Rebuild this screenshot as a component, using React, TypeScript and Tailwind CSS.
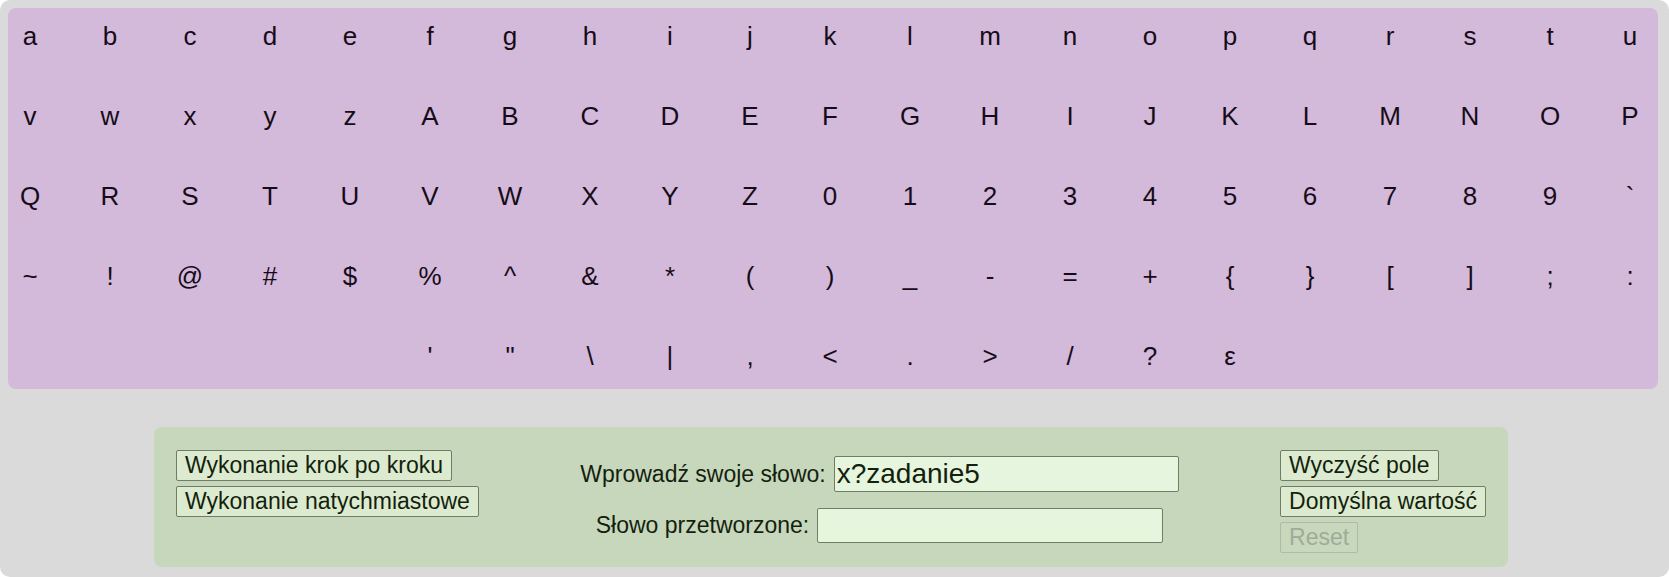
import React from "react";

const rows: string[][] = [
	"abcdefghijklmnopqrstu".split(""),
	"vwxyzABCDEFGHIJKLMNOP".split(""),
	"QRSTUVWXYZ0123456789`".split(""),
	["~", "!", "@", "#", "$", "%", "^", "&", "*", "(", ")", "_", "-", "=", "+", "{", "}", "[", "]", ";", ":"],
	["", "", "", "", "", "'", '"', "\\", "|", ",", "<", ".", ">", "/", "?", "ε"],
];

function Btn({ label, disabled }: { label: string; disabled?: boolean }) {
	return (
		<button
			type="button"
			disabled={disabled}
			className={
				disabled
					? "h-[31px] px-2 border border-[#aebba6] rounded-[2px] bg-[#c8d8bd] text-[#9eac97] text-[23px] leading-none whitespace-nowrap"
					: "h-[31px] px-2 border border-[#6e7d63] rounded-[2px] bg-[#dcebd0] text-[#141f0e] text-[23px] leading-none whitespace-nowrap"
			}
		>
			{label}
		</button>
	);
}

export default function App() {
	const [word, setWord] = React.useState("x?zadanie5");
	const [out, setOut] = React.useState("");
	return (
		<div
			className="w-full h-[577px] bg-[#dadada] rounded-[10px] overflow-hidden"
			style={{ fontFamily: '"Liberation Sans", Arial, sans-serif' }}
		>
			<div className="pt-2 pl-2">
				<div className="w-[1650px] h-[381px] bg-[#d3b9da] rounded-[8px] pt-[6px]">
					<div className="grid grid-cols-[repeat(21,44px)] auto-rows-[44px] gap-x-[36px] gap-y-[36px]">
						{rows.map((r, i) =>
							r.map((ch, j) => (
								<div
									key={i + "-" + j}
									className="flex items-center justify-center text-[26px] text-[#160c18] cursor-pointer select-none"
								>
									{ch}
								</div>
							))
						)}
					</div>
				</div>
			</div>
			<div className="mt-[38px] ml-[154px] w-[1354px] h-[140px] bg-[#c7d7bc] rounded-[8px] px-[22px] pt-[23px] flex justify-between items-start text-[#141f0e]">
				<div className="flex flex-col items-start gap-[5px]">
					<Btn label="Wykonanie krok po kroku" />
					<Btn label="Wykonanie natychmiastowe" />
				</div>
				<div className="flex flex-col items-center gap-[16px] mt-[6px]">
					<div className="flex items-center gap-2">
						<span className="text-[23px]">Wprowadź swoje słowo:</span>
						<input
							value={word}
							onInput={(e) => setWord(e.currentTarget.value)}
							className="w-[345px] h-[36px] px-[2px] bg-[#e6f5dd] border border-[#6e7d63] rounded-[2px] text-[28px] text-[#141f0e] outline-none"
						/>
					</div>
					<div className="flex items-center gap-2">
						<span className="text-[23px]">Słowo przetworzone:</span>
						<input
							value={out}
							onInput={(e) => setOut(e.currentTarget.value)}
							className="w-[346px] h-[35px] px-[2px] bg-[#e6f5dd] border border-[#6e7d63] rounded-[2px] text-[28px] text-[#141f0e] outline-none"
						/>
					</div>
				</div>
				<div className="flex flex-col items-start gap-[5px]">
					<Btn label="Wyczyść pole" />
					<Btn label="Domyślna wartość" />
					<Btn label="Reset" disabled />
				</div>
			</div>
		</div>
	);
}
